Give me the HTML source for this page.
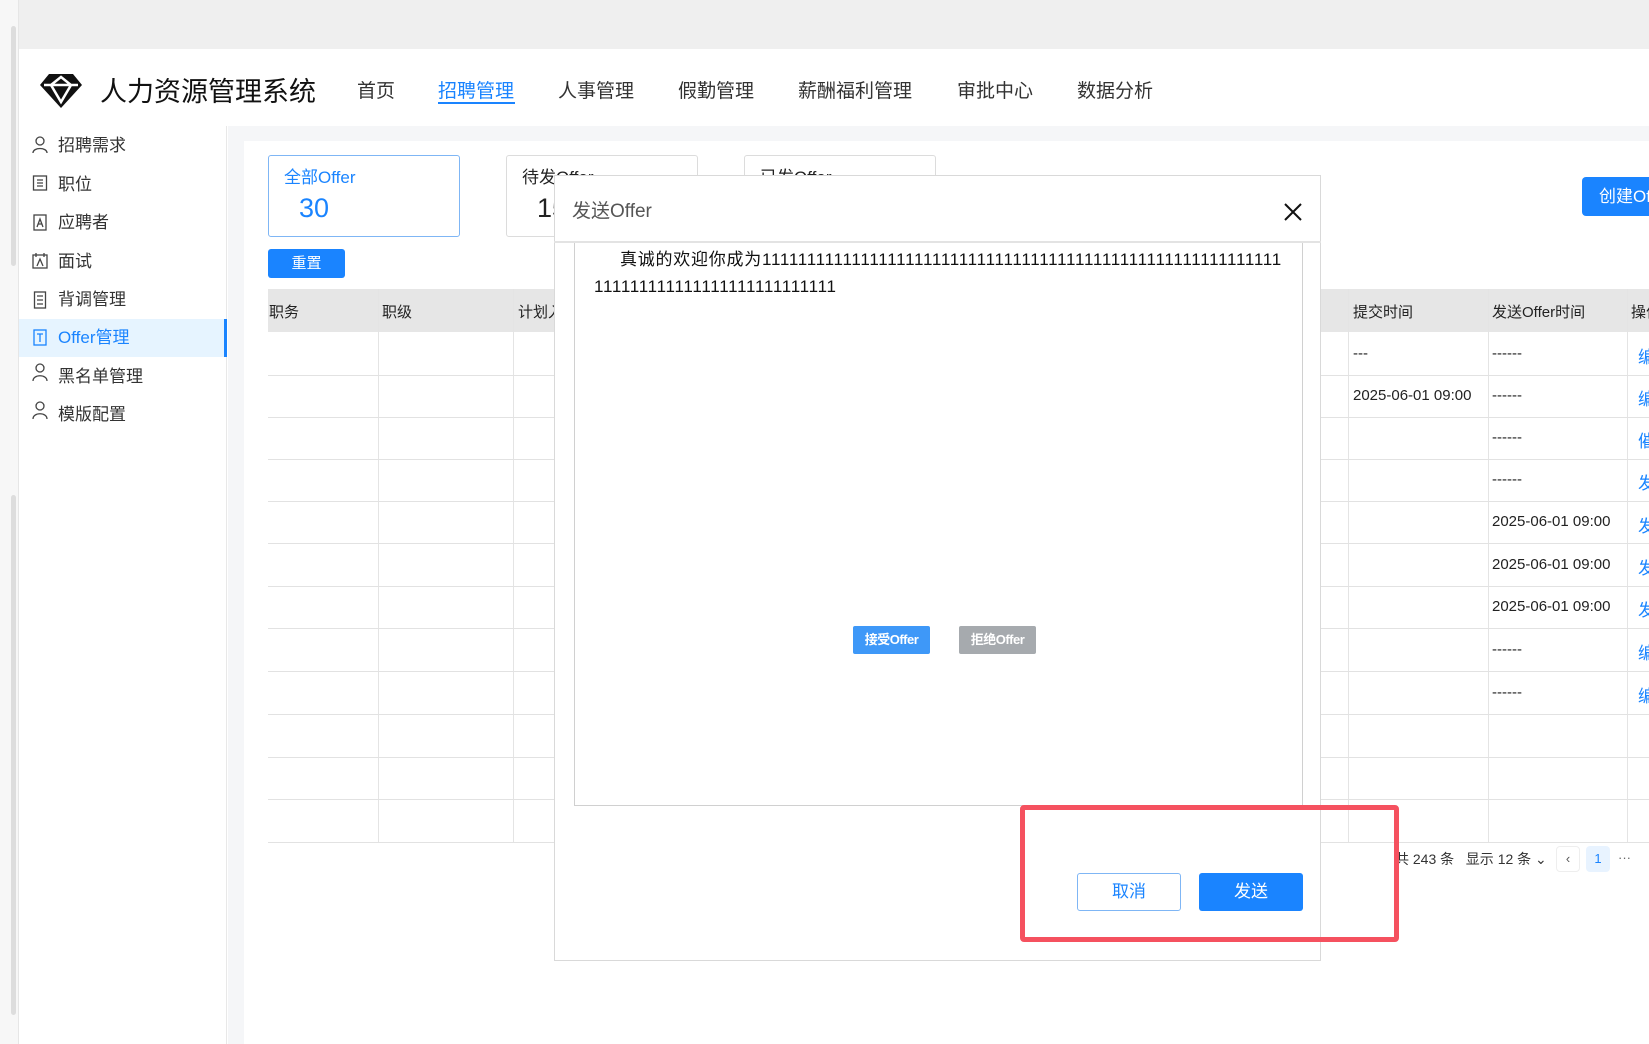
<!DOCTYPE html>
<html><head><meta charset="utf-8"><style>
*{margin:0;padding:0;box-sizing:border-box}
body{width:1649px;height:1044px;position:relative;overflow:hidden;background:#fff;font-family:"Liberation Sans","Noto Sans CJK SC",sans-serif;color:#222}
.a{position:absolute;white-space:nowrap;text-decoration:none}
.nav{top:76px;font-size:19px;color:#333}
.side{left:58px;font-size:17px;color:#333}
.card{border:1px solid #dcdcdc;border-radius:3px;background:#fff}
.th{top:289px;height:43px;background:#e6e6e6;left:268px;width:1381px}
.vl{width:1px;background:#e4e4e4}
.hl{height:1px;background:#e2e2e2;left:268px;width:1381px}
.cell{font-size:15px;color:#222}
.op{font-size:17px;color:#1a84ff;left:1638px}
</style></head><body>
<div class="a" style="left:0;top:0;width:19px;height:1044px;background:#f7f7f7;border-right:1px solid #e6e6e6"></div>
<div class="a" style="left:11px;top:26px;width:5px;height:240px;background:#ddd;border-radius:3px"></div>
<div class="a" style="left:11px;top:495px;width:5px;height:520px;background:#ddd;border-radius:3px"></div>
<div class="a" style="left:19px;top:0;width:1630px;height:49px;background:#efefef"></div>
<svg class="a" style="left:39px;top:73px" width="44" height="36" viewBox="0 0 44 36"><path d="M10 1H34L43 12L22 35L1 12Z" fill="#111"/><path d="M12 12L22 4L32 12L22 29Z M5 12H39" stroke="#fff" stroke-width="2.5" fill="none"/></svg>
<div class="a" style="left:100px;top:70px;font-size:27px;color:#111">人力资源管理系统</div>
<div class="a nav" style="left:357px">首页</div>
<div class="a nav" style="left:438px;color:#1a84ff">招聘管理</div>
<div class="a" style="left:438px;top:102px;width:77px;height:2px;background:#1a84ff"></div>
<div class="a nav" style="left:558px">人事管理</div>
<div class="a nav" style="left:678px">假勤管理</div>
<div class="a nav" style="left:798px">薪酬福利管理</div>
<div class="a nav" style="left:957px">审批中心</div>
<div class="a nav" style="left:1077px">数据分析</div>
<div class="a" style="left:19px;top:126px;width:208px;height:918px;background:#fff;border-right:1px solid #e8e8e8"></div>
<div class="a" style="left:19px;top:319px;width:208px;height:38px;background:#e6f4ff;border-right:3px solid #1a84ff"></div>
<div class="a side" style="top:131px">招聘需求</div>
<div class="a side" style="top:170px">职位</div>
<div class="a side" style="top:208px">应聘者</div>
<div class="a side" style="top:247px">面试</div>
<div class="a side" style="top:285px">背调管理</div>
<div class="a side" style="top:323px;color:#1a84ff">Offer管理</div>
<div class="a side" style="top:362px">黑名单管理</div>
<div class="a side" style="top:400px">模版配置</div>
<svg class="a" style="left:32px;top:136px" width="16" height="300" viewBox="0 0 16 300" fill="none" stroke="#444" stroke-width="1.3">
<circle cx="8" cy="5" r="4"/><path d="M1 17C1 11 15 11 15 17"/>
<rect x="1.5" y="40" width="13" height="14"/><path d="M5 44H11M5 47H11M5 50H11"/>
<rect x="2" y="79" width="12" height="15"/><path d="M5 91L8 83L11 91M6 88H10"/>
<rect x="1" y="119" width="14" height="13"/><path d="M4 117V121M12 117V121M5 130L8 123L11 130"/>
<rect x="2.5" y="156" width="11" height="16"/><path d="M5 160H11M5 164H11M5 168H11"/>
<g stroke="#1a84ff"><rect x="2" y="194" width="12" height="15"/><path d="M5 198H11M8 198V206"/></g>
<circle cx="8" cy="232" r="4"/><path d="M1 245C1 238 15 238 15 245"/>
<circle cx="8" cy="270" r="4"/><path d="M1 283C1 276 15 276 15 283"/>
</svg>
<div class="a" style="left:228px;top:126px;width:1421px;height:918px;background:#f5f6f8"></div>
<div class="a" style="left:244px;top:141px;width:1405px;height:903px;background:#fff"></div>
<div class="a card" style="left:268px;top:155px;width:192px;height:82px;border-color:#7fb6f5"></div>
<div class="a" style="left:284px;top:163px;font-size:17px;color:#1a84ff">全部Offer</div>
<div class="a" style="left:299px;top:193px;font-size:27px;color:#1a84ff">30</div>
<div class="a card" style="left:506px;top:155px;width:192px;height:82px"></div>
<div class="a" style="left:522px;top:163px;font-size:17px">待发Offer</div>
<div class="a" style="left:537px;top:193px;font-size:27px">15</div>
<div class="a card" style="left:744px;top:155px;width:192px;height:82px"></div>
<div class="a" style="left:760px;top:163px;font-size:17px">已发Offer</div>
<div class="a" style="left:268px;top:249px;width:77px;height:29px;background:#1a84ff;border-radius:3px;color:#fff;font-size:15px;text-align:center;line-height:29px">重置</div>
<div class="a" style="left:1582px;top:177px;width:80px;height:39px;background:#1a84ff;border-radius:4px;color:#fff;font-size:17px;line-height:39px;padding-left:17px">创建Offer</div>
<div class="a th"></div>
<div class="a cell" style="left:269px;top:301px">职务</div>
<div class="a cell" style="left:382px;top:301px">职级</div>
<div class="a cell" style="left:518px;top:301px">计划入职</div>
<div class="a cell" style="left:1353px;top:301px">提交时间</div>
<div class="a cell" style="left:1492px;top:301px">发送Offer时间</div>
<div class="a cell" style="left:1631px;top:301px">操作</div>
<div class="a vl" style="left:378px;top:289px;height:554px"></div>
<div class="a vl" style="left:513px;top:289px;height:554px"></div>
<div class="a vl" style="left:1348px;top:289px;height:554px"></div>
<div class="a vl" style="left:1488px;top:289px;height:554px"></div>
<div class="a vl" style="left:1627px;top:289px;height:554px"></div>
<div class="a hl" style="top:375px"></div><div class="a hl" style="top:417px"></div><div class="a hl" style="top:459px"></div><div class="a hl" style="top:501px"></div><div class="a hl" style="top:543px"></div><div class="a hl" style="top:586px"></div><div class="a hl" style="top:628px"></div><div class="a hl" style="top:671px"></div><div class="a hl" style="top:714px"></div><div class="a hl" style="top:757px"></div><div class="a hl" style="top:799px"></div><div class="a hl" style="top:842px"></div>
<div class="a cell" style="left:1353px;top:345px">---</div>
<div class="a cell" style="left:1353px;top:387px">2025-06-01 09:00</div>
<div class="a cell" style="left:1492px;top:345px">------</div>
<div class="a cell" style="left:1492px;top:387px">------</div>
<div class="a cell" style="left:1492px;top:429px">------</div>
<div class="a cell" style="left:1492px;top:471px">------</div>
<div class="a cell" style="left:1492px;top:513px">2025-06-01 09:00</div>
<div class="a cell" style="left:1492px;top:556px">2025-06-01 09:00</div>
<div class="a cell" style="left:1492px;top:598px">2025-06-01 09:00</div>
<div class="a cell" style="left:1492px;top:641px">------</div>
<div class="a cell" style="left:1492px;top:684px">------</div>
<div class="a op" style="top:343px">编辑</div><div class="a op" style="top:385px">编辑</div><div class="a op" style="top:427px">催办</div><div class="a op" style="top:469px">发送</div><div class="a op" style="top:512px">发送</div><div class="a op" style="top:554px">发送</div><div class="a op" style="top:596px">发送</div><div class="a op" style="top:639px">编辑</div><div class="a op" style="top:682px">编辑</div>
<div class="a" style="left:1395px;top:849px;font-size:14px;color:#333">共 243 条 &nbsp; 显示 12 条 ⌄</div>
<div class="a" style="left:1556px;top:846px;width:24px;height:26px;border:1px solid #eee;border-radius:4px;font-size:13px;text-align:center;line-height:24px;color:#555">‹</div>
<div class="a" style="left:1586px;top:846px;width:24px;height:26px;background:#e8f3ff;border-radius:4px;font-size:13px;text-align:center;line-height:26px;color:#1a84ff">1</div>
<div class="a" style="left:1618px;top:850px;font-size:13px;color:#666">···</div>
<div class="a" style="left:554px;top:175px;width:767px;height:786px;background:#fff;border:1px solid #d9d9d9"></div>
<div class="a" style="left:554px;top:241px;width:767px;height:2px;background:#e3e3e3"></div>
<div class="a" style="left:572px;top:196px;font-size:19px;color:#555">发送Offer</div>
<svg class="a" style="left:1283px;top:202px" width="20" height="20" viewBox="0 0 20 20"><path d="M2 2L18 18M18 2L2 18" stroke="#111" stroke-width="2"/></svg>
<div class="a" style="left:574px;top:243px;width:729px;height:563px;border:1px solid #d0d0d0;border-top:none"></div>
<div class="a" style="left:620px;top:245px;font-size:17px;color:#111;letter-spacing:0.75px">真诚的欢迎你成为<span style="letter-spacing:0.75px">1111111111111111111111111111111111111111111111111111111111</span></div>
<div class="a" style="left:594px;top:277px;font-size:17px;color:#111;letter-spacing:0.75px">111111111111111111111111111</div>
<div class="a" style="left:853px;top:626px;width:77px;height:28px;background:#3e98f8;border-radius:2px;color:#fff;font-size:13px;font-weight:bold;text-align:center;line-height:28px;letter-spacing:-0.5px">接受Offer</div>
<div class="a" style="left:959px;top:626px;width:77px;height:28px;background:#a6aaae;border-radius:2px;color:#fff;font-size:13px;font-weight:bold;text-align:center;line-height:28px;letter-spacing:-0.5px">拒绝Offer</div>
<div class="a" style="left:1077px;top:873px;width:104px;height:38px;border:1px solid #7fb6f5;border-radius:3px;color:#1a84ff;font-size:17px;text-align:center;line-height:36px">取消</div>
<div class="a" style="left:1199px;top:873px;width:104px;height:38px;background:#1a84ff;border-radius:3px;color:#fff;font-size:17px;text-align:center;line-height:38px">发送</div>
<div class="a" style="left:1020px;top:805px;width:379px;height:137px;border:5px solid #f5515f;border-radius:4px"></div>
</body></html>
